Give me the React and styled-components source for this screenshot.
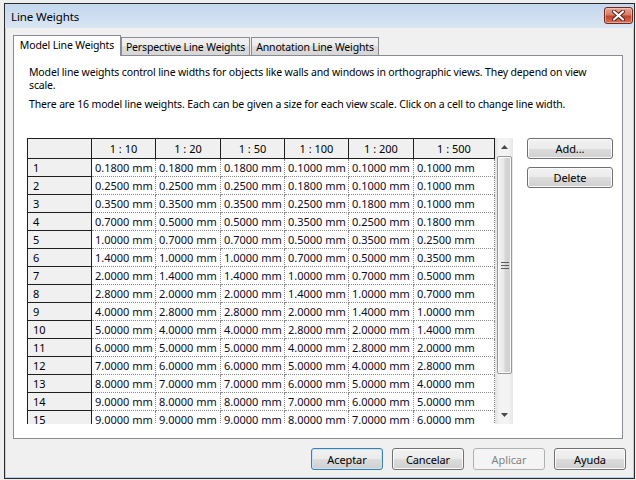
import styled, { createGlobalStyle, css } from "styled-components";

const GlobalStyle = createGlobalStyle`
  html, body {
    margin: 0;
    padding: 0;
    background: #eeeeee;
  }
  body {
    font-family: "Noto Sans", "Open Sans", sans-serif;
    font-size: 11px;
    color: #000;
  }
`;

const Desktop = styled.div`
  width: 636px;
  height: 480px;
  padding: 3px 0 0 4px;
  box-sizing: border-box;
`;

const Window = styled.div`
  width: 631px;
  height: 476px;
  box-sizing: border-box;
  border: 1px solid #2b2b2b;
  background: #b9d0ea;
  display: flex;
  flex-direction: column;
`;

const TitleBar = styled.div`
  height: 24px;
  flex: none;
  display: flex;
  align-items: center;
  justify-content: space-between;
  padding: 0 1px 0 6px;
  background: linear-gradient(#c3d7ee, #d9e5f3);
`;

const Title = styled.span`
  font-size: 11.5px;
  letter-spacing: -0.1px;
  margin-top: 1px;
`;

const CloseButton = styled.div`
  width: 29px;
  height: 17px;
  box-sizing: border-box;
  margin-top: -1px;
  border: 1px solid #6d2a1f;
  border-radius: 3px;
  background: linear-gradient(#e8a596 0%, #d77b66 45%, #c2432b 55%, #d2735c 100%);
  box-shadow: inset 0 0 0 1px rgba(255, 220, 210, 0.5);
  display: flex;
  align-items: center;
  justify-content: center;
`;

const Body = styled.div`
  flex: 1;
  margin: 0 1px 1px 1px;
  background: #f0f0f0;
  padding: 7px 0 0 7px;
  display: flex;
  flex-direction: column;
`;

const TabRow = styled.div`
  height: 20px;
  display: flex;
  align-items: flex-end;
`;

const Tab = styled.div`
  box-sizing: border-box;
  width: ${(p) => p.$w}px;
  margin-left: ${(p) => p.$ml || 0}px;
  display: flex;
  align-items: center;
  justify-content: center;
  border: 1px solid #898c95;
  border-bottom: none;
  white-space: nowrap;
  font-size: 10.5px;
  letter-spacing: -0.15px;
  ${(p) =>
    p.$active
      ? css`
          height: 21px;
          margin-bottom: -1px;
          background: #fff;
          position: relative;
          z-index: 1;
          padding-bottom: 2px;
        `
      : css`
          height: 18px;
          background: linear-gradient(#f2f2f2 0%, #ebebeb 50%, #dddddd 50%, #d6d6d6 100%);
          padding-top: 1px;
        `}
`;

const Panel = styled.div`
  width: 610px;
  height: 384px;
  box-sizing: border-box;
  border: 1px solid #898c95;
  background: #fff;
  padding: 10px 9px 0 13px;
`;

const Para = styled.p`
  max-width: 565px;
  margin: 0 0 6px 2px;
  line-height: 13px;
  font-size: 10.5px;
  letter-spacing: -0.15px;
`;

const GridRow = styled.div`
  margin-top: 27px;
  display: flex;
  align-items: flex-start;
`;

const GridBox = styled.div`
  display: flex;
  height: 286px;
`;

const Table = styled.div`
  height: 286px;
  overflow: hidden;
  box-sizing: border-box;
  border-top: 1px solid #1e1e1e;
  border-left: 1px solid #1e1e1e;
  display: grid;
  grid-template-columns: 64px 64px 65px 64px 64px 65px 81px;
  grid-template-rows: 20px;
  grid-auto-rows: 18px;
  align-content: start;
`;

const HeadCell = styled.div`
  box-sizing: border-box;
  background: #f0f0f0;
  border-right: 1px solid #1e1e1e;
  border-bottom: 1px solid #1e1e1e;
  display: flex;
  align-items: center;
  justify-content: center;
  font-size: 11px;
`;

const RowHead = styled.div`
  box-sizing: border-box;
  background: #f0f0f0;
  border-right: 1px solid #1e1e1e;
  border-bottom: 1px solid #1e1e1e;
  display: flex;
  align-items: center;
  padding-left: 5px;
  font-size: 11px;
`;

const Cell = styled.div`
  box-sizing: border-box;
  background: #fff;
  border-right: 1px dotted #8a8a8a;
  border-bottom: 1px dotted #8a8a8a;
  display: flex;
  align-items: center;
  padding-left: 3px;
  font-size: 11px;
  white-space: nowrap;
  color: #0a0a1e;
`;

const ScrollBar = styled.div`
  width: 18px;
  height: 286px;
  box-sizing: border-box;
  background: linear-gradient(to right, #e2e2e2, #f3f3f3 25%, #f3f3f3 75%, #e6e6e6);
  display: flex;
  flex-direction: column;
  align-items: center;
`;

const Arrow = styled.div`
  height: 18px;
  width: 18px;
  display: flex;
  align-items: center;
  justify-content: center;
`;

const Thumb = styled.div`
  width: 15px;
  height: 218px;
  box-sizing: border-box;
  margin-left: 1px;
  border: 1px solid #979797;
  border-radius: 2px;
  background: linear-gradient(to right, #f3f3f3, #e8e8e8 45%, #d6d6d6 55%, #cfcfcf);
  box-shadow: inset 0 0 0 1px #fbfbfb;
  display: flex;
  align-items: center;
  justify-content: center;
`;

const Spacer = styled.div`
  flex: 1;
`;

const SideButtons = styled.div`
  margin-left: 14px;
  display: flex;
  flex-direction: column;
  gap: 8px;
`;

const Button = styled.div`
  box-sizing: border-box;
  width: ${(p) => p.$w || 72}px;
  height: ${(p) => p.$h || 22}px;
  border: 1px solid #707070;
  border-radius: 3px;
  background: linear-gradient(#f2f2f2 0%, #ebebeb 50%, #dddddd 50%, #cfcfcf 100%);
  box-shadow: inset 0 0 0 1px #fbfbfb;
  display: flex;
  align-items: center;
  justify-content: center;
  font-size: 11px;
  letter-spacing: -0.1px;
  ${(p) =>
    p.$default &&
    css`
      border-color: #3c7fb1;
      box-shadow: inset 0 0 0 1px #c7e3f6;
    `}
  ${(p) =>
    p.$disabled &&
    css`
      border-color: #adb2b5;
      background: #f4f4f4;
      box-shadow: none;
      color: #838383;
    `}
`;

const Footer = styled.div`
  margin-top: 9px;
  padding-right: 7px;
  display: flex;
  justify-content: flex-end;
  gap: 9px;
`;

const cols = ["1 : 10", "1 : 20", "1 : 50", "1 : 100", "1 : 200", "1 : 500"];

const data = [
  ["0.1800", "0.1800", "0.1800", "0.1000", "0.1000", "0.1000"],
  ["0.2500", "0.2500", "0.2500", "0.1800", "0.1000", "0.1000"],
  ["0.3500", "0.3500", "0.3500", "0.2500", "0.1800", "0.1000"],
  ["0.7000", "0.5000", "0.5000", "0.3500", "0.2500", "0.1800"],
  ["1.0000", "0.7000", "0.7000", "0.5000", "0.3500", "0.2500"],
  ["1.4000", "1.0000", "1.0000", "0.7000", "0.5000", "0.3500"],
  ["2.0000", "1.4000", "1.4000", "1.0000", "0.7000", "0.5000"],
  ["2.8000", "2.0000", "2.0000", "1.4000", "1.0000", "0.7000"],
  ["4.0000", "2.8000", "2.8000", "2.0000", "1.4000", "1.0000"],
  ["5.0000", "4.0000", "4.0000", "2.8000", "2.0000", "1.4000"],
  ["6.0000", "5.0000", "5.0000", "4.0000", "2.8000", "2.0000"],
  ["7.0000", "6.0000", "6.0000", "5.0000", "4.0000", "2.8000"],
  ["8.0000", "7.0000", "7.0000", "6.0000", "5.0000", "4.0000"],
  ["9.0000", "8.0000", "8.0000", "7.0000", "6.0000", "5.0000"],
  ["9.0000", "9.0000", "9.0000", "8.0000", "7.0000", "6.0000"],
  ["10.0000", "10.0000", "10.0000", "9.0000", "8.0000", "7.0000"],
];

const CloseIcon = () => (
  <svg width="13" height="11" viewBox="0 0 13 11">
    <path d="M2 1.5 L11 9.5 M11 1.5 L2 9.5" stroke="#5a1c14" strokeWidth="4" strokeLinecap="round" />
    <path d="M2 1.5 L11 9.5 M11 1.5 L2 9.5" stroke="#fff" strokeWidth="2.2" strokeLinecap="round" />
  </svg>
);

const Tri = ({ down }) => (
  <svg width="7" height="4" viewBox="0 0 7 4">
    <path d={down ? "M0 0 L7 0 L3.5 4 Z" : "M0 4 L7 4 L3.5 0 Z"} fill="#4a4a4a" />
  </svg>
);

const Grip = () => (
  <svg width="8" height="7" viewBox="0 0 8 7">
    <path d="M0 0.5 H8 M0 3.5 H8 M0 6.5 H8" stroke="#5c5c5c" strokeWidth="1" />
  </svg>
);

export default function App() {
  return (
    <>
      <GlobalStyle />
      <Desktop>
        <Window>
          <TitleBar>
            <Title>Line Weights</Title>
            <CloseButton>
              <CloseIcon />
            </CloseButton>
          </TitleBar>
          <Body>
            <TabRow>
              <Tab $w={108} $active>Model Line Weights</Tab>
              <Tab $w={129}>Perspective Line Weights</Tab>
              <Tab $w={128} $ml={1}>Annotation Line Weights</Tab>
            </TabRow>
            <Panel>
              <Para>
                Model line weights control line widths for objects like walls and windows in orthographic views. They depend on view scale.
              </Para>
              <Para>
                There are 16 model line weights. Each can be given a size for each view scale. Click on a cell to change line width.
              </Para>
              <GridRow>
                <GridBox>
                  <Table>
                    <HeadCell />
                    {cols.map((c) => (
                      <HeadCell key={c}>{c}</HeadCell>
                    ))}
                    {data.map((row, i) => [
                      <RowHead key={`h${i}`}>{i + 1}</RowHead>,
                      ...row.map((v, j) => <Cell key={`${i}-${j}`}>{v} mm</Cell>),
                    ])}
                  </Table>
                  <ScrollBar>
                    <Arrow>
                      <Tri />
                    </Arrow>
                    <Thumb>
                      <Grip />
                    </Thumb>
                    <Spacer />
                    <Arrow>
                      <Tri down />
                    </Arrow>
                  </ScrollBar>
                </GridBox>
                <SideButtons>
                  <Button $w={86} $h={21}>Add...</Button>
                  <Button $w={86} $h={21}>Delete</Button>
                </SideButtons>
              </GridRow>
            </Panel>
            <Footer>
              <Button $default>Aceptar</Button>
              <Button>Cancelar</Button>
              <Button $disabled>Aplicar</Button>
              <Button>Ayuda</Button>
            </Footer>
          </Body>
        </Window>
      </Desktop>
    </>
  );
}
